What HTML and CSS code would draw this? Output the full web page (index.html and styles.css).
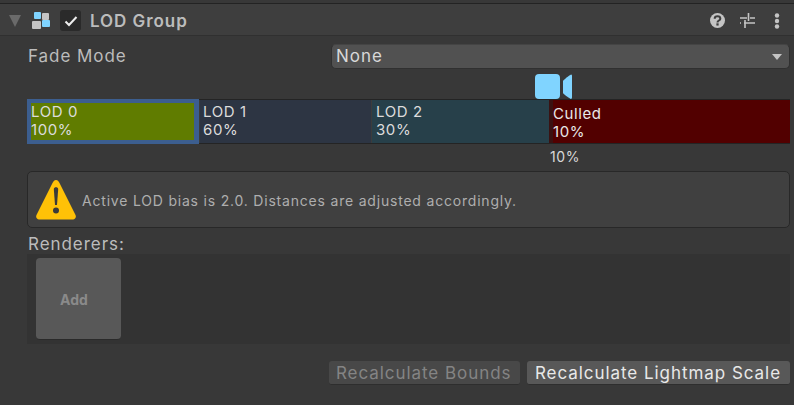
FILE: index.html
```html
<!DOCTYPE html>
<html>

<head>
    <meta charset="UTF-8">
    <title>LOD Group</title>
    <link rel="stylesheet" href="styles.css">
</head>

<body>
    <!-- Component header -->
    <div class="header">
        <span class="foldout"></span>
        <svg class="comp-icon" width="18" height="18" viewBox="0 0 18 18">
            <rect x="2" y="0" width="7" height="7" rx="1" fill="#80d4ff" />
            <rect x="10" y="1" width="7" height="7" rx="1" fill="#c4c4c4" />
            <rect x="0" y="9" width="9" height="8" rx="1" fill="#c4c4c4" />
            <rect x="10" y="8" width="8" height="7" rx="1" fill="#80d4ff" />
        </svg>
        <span class="enable">
            <svg width="14" height="12" viewBox="0 0 14 12">
                <path d="M1.5 6.5 L5 10 L12.5 2" fill="none" stroke="#eeeeee" stroke-width="2" />
            </svg>
        </span>
        <span class="title">LOD Group</span>
        <span class="header-icons">
            <svg width="15" height="15" viewBox="0 0 16 16">
                <circle cx="8" cy="8" r="8" fill="#c4c4c4" />
                <path d="M5 6 C5 2.500 11 2.500 11 6 C11 8 8 8 8 10" fill="none" stroke="#3e3e3e" stroke-width="2.200" />
                <rect x="6.800" y="11" width="2.400" height="2.400" fill="#3e3e3e" />
            </svg>
            <svg class="sliders" width="15" height="15" viewBox="0 0 15 15">
                <path d="M0 5h7M10 5h5M8.500 0v8M0 10h1M4 10h11M5 7v8" fill="none" stroke="#c4c4c4" stroke-width="1.600" />
            </svg>
            <svg class="dots" width="6" height="16" viewBox="0 0 6 16">
                <circle cx="3" cy="2.500" r="2.200" fill="#c4c4c4" />
                <circle cx="3" cy="8" r="2.200" fill="#c4c4c4" />
                <circle cx="3" cy="13.500" r="2.200" fill="#c4c4c4" />
            </svg>
        </span>
    </div>

    <div class="content">
        <!-- Fade mode -->
        <div class="field">
            <label class="field-label">Fade Mode</label>
            <div class="dropdown">None<span class="arrow"></span></div>
        </div>

        <!-- Camera marker -->
        <div class="camera-row">
            <svg width="38" height="26" viewBox="0 0 38 26">
                <rect x="0" y="0" width="25" height="25" rx="4" fill="#80d4ff" />
                <path d="M28 7 C28 6 35 1 36 0.500 C36.500 0.500 37 1 37 2 V23 C37 24 36.500 25 36 25 C35 24.500 28 20 28 19 Z" fill="#80d4ff" />
            </svg>
        </div>

        <!-- LOD slider -->
        <div class="lod-bar">
            <div class="lod lod-0">LOD 0<br>100%</div>
            <div class="lod lod-1">LOD 1<br>60%</div>
            <div class="lod lod-2">LOD 2<br>30%</div>
            <div class="lod lod-culled">Culled<br>10%</div>
        </div>
        <div class="lod-value">10%</div>

        <!-- Warning -->
        <div class="help-box">
            <svg width="40" height="40" viewBox="0 0 40 40">
                <path d="M20 0 C21.500 0 22.500 1 23.500 3 L39.500 35 C40.500 37.500 39 39.500 37 39.500 H3 C1 39.500 -0.500 37.500 0.500 35 L16.500 3 C17.500 1 18.500 0 20 0 Z" fill="#ffc107" />
                <path d="M17.800 9 C17.800 6.500 22.200 6.500 22.200 9 L21 25 H19 Z" fill="#3a3a3a" />
                <circle cx="20" cy="30.500" r="3" fill="#3a3a3a" />
            </svg>
            <span class="help-text">Active LOD bias is 2.0. Distances are adjusted accordingly.</span>
        </div>

        <!-- Renderers -->
        <div class="renderers-label">Renderers:</div>
        <div class="renderers">
            <div class="add-btn">Add</div>
        </div>

        <div class="buttons">
            <div class="btn btn-off">Recalculate Bounds</div>
            <div class="btn">Recalculate Lightmap Scale</div>
        </div>
    </div>
</body>

</html>
```
FILE: styles.css
```css
* {
    box-sizing: border-box;
}

html,
body {
    height: 100%;
}

body {
    margin: 0;
    overflow: hidden;
    background-color: #383838;
    font-family: Inter, "Noto Sans", sans-serif;
    font-size: 17px;
    letter-spacing: 0.95px;
    color: #bcbcbc;
}

.header {
    display: flex;
    align-items: center;
    height: 33px;
    margin-top: 3px;
    padding: 2px 0 0 9px;
    background-color: #3e3e3e;
    border-top: 1px solid #232323;
    border-bottom: 1px solid #303030;
}

.foldout {
    width: 0;
    height: 0;
    border-left: 6.500px solid transparent;
    border-right: 6.500px solid transparent;
    border-top: 12px solid #6a6a6a;
}

.comp-icon {
    margin-left: 11px;
}

.enable {
    display: flex;
    align-items: center;
    justify-content: center;
    width: 21px;
    height: 21px;
    margin-left: 10px;
    background-color: #2a2a2a;
    border-radius: 3px;
}

.title {
    margin-left: 9px;
    font-weight: 600;
}

.header-icons {
    display: flex;
    align-items: center;
    gap: 15px;
    margin-left: auto;
    padding-right: 14px;
}

.sliders {
    margin-right: 4px;
}

.content {
    padding: 8px 4px 0 27px;
}

.field {
    display: flex;
    align-items: center;
    height: 25px;
}

.field-label {
    width: 304px;
    padding: 0 0 2px 1px;
}

.dropdown {
    flex: 1;
    display: flex;
    align-items: center;
    justify-content: space-between;
    height: 25px;
    padding: 0 6px 1px 4px;
    background-color: #515151;
    border: 1px solid #303030;
    border-top-color: #444444;
    border-radius: 5px;
    color: #d8d8d8;
}

.arrow {
    width: 0;
    height: 0;
    margin: 1px 1px 0 0;
    border-left: 5px solid transparent;
    border-right: 5px solid transparent;
    border-top: 6px solid #c4c4c4;
}

.camera-row {
    display: flex;
    height: 30px;
    padding: 5px 0 0 508px;
}

.lod-bar {
    display: flex;
    height: 45px;
    padding: 1px 0;
    background-color: #242424;
    font-size: 15px;
    letter-spacing: 0.6px;
    line-height: 18px;
    color: #dcdcdc;
}

.lod {
    padding: 3px 0 0 3px;
}

.lod-0 {
    width: 172px;
    margin: -1px 0;
    padding: 0;
    background-color: #607c00;
    border: solid #3c5e8f;
    border-width: 4px 5px 4px 4px;
}

.lod-1 {
    width: 172px;
    background-color: #2d3543;
    border-left: 1px solid #3c3c3c;
}

.lod-2 {
    width: 178px;
    padding-left: 4px;
    background-color: #27404a;
    border-left: 1px solid #3c3c3c;
}

.lod-culled {
    flex: 1;
    padding: 5px 0 0;
    background-color: #520000;
    border-left: 4px solid #3a1212;
    color: #e8e8e8;
}

.lod-value {
    height: 27px;
    padding: 4px 0 0 523px;
    font-size: 14px;
    letter-spacing: 0.6px;
    color: #d8d8d8;
}

.help-box {
    display: flex;
    align-items: center;
    gap: 6px;
    height: 57px;
    padding-left: 8px;
    background-color: #404040;
    border: 1px solid #282828;
    border-radius: 5px;
    font-size: 14px;
    letter-spacing: 0.8px;
    color: #aeaeae;
}

.help-text {
    padding-top: 1px;
}

.renderers-label {
    height: 26px;
    padding: 7px 0 0 1px;
    line-height: 19px;
}

.renderers {
    height: 90px;
    padding: 4px 9px;
    background-color: #333333;
}

.add-btn {
    width: 85px;
    height: 82px;
    padding: 33px 9px 0 0;
    background-color: #585858;
    border-bottom: 1px solid #2a2a2a;
    border-radius: 4px;
    font-size: 14px;
    font-weight: 700;
    letter-spacing: 0;
    text-align: center;
    color: #8a8a8a;
}

.buttons {
    display: flex;
    justify-content: flex-end;
    gap: 7px;
    margin-top: 17px;
}

.btn {
    height: 24px;
    padding: 0 9px 0 8px;
    background-color: #585858;
    border-bottom: 1px solid #2e2e2e;
    border-radius: 3px;
    line-height: 25px;
    color: #e8e8e8;
    white-space: nowrap;
}

.btn-off {
    width: 191px;
    padding: 0 0 0 7px;
    background-color: #484848;
    color: #848484;
}
```
